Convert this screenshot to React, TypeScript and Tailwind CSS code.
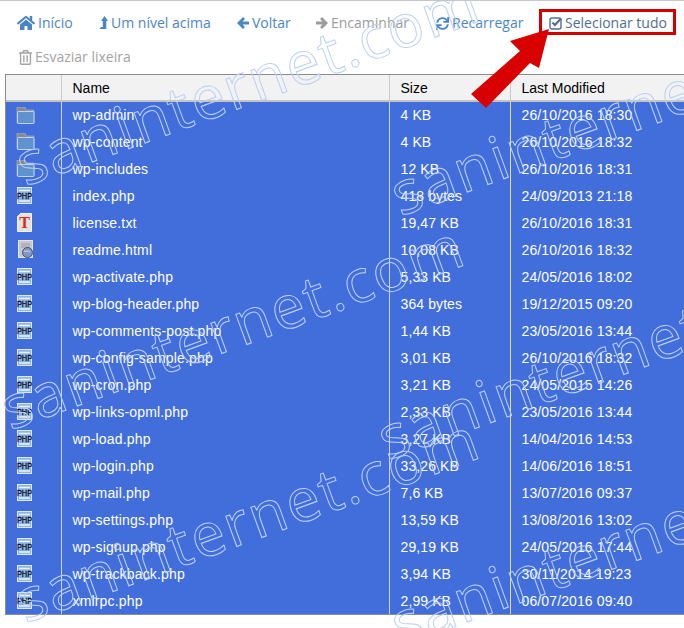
import { FaHome, FaSync, FaRegTrashAlt } from "react-icons/fa";

const files = [
  ["folder", "wp-admin", "4 KB", "26/10/2016 18:30"],
  ["folder", "wp-content", "4 KB", "26/10/2016 18:32"],
  ["folder", "wp-includes", "12 KB", "26/10/2016 18:31"],
  ["php", "index.php", "418 bytes", "24/09/2013 21:18"],
  ["txt", "license.txt", "19,47 KB", "26/10/2016 18:31"],
  ["html", "readme.html", "10,08 KB", "26/10/2016 18:32"],
  ["php", "wp-activate.php", "5,33 KB", "24/05/2016 18:02"],
  ["php", "wp-blog-header.php", "364 bytes", "19/12/2015 09:20"],
  ["php", "wp-comments-post.php", "1,44 KB", "23/05/2016 13:44"],
  ["php", "wp-config-sample.php", "3,01 KB", "26/10/2016 18:32"],
  ["php", "wp-cron.php", "3,21 KB", "24/05/2015 14:26"],
  ["php", "wp-links-opml.php", "2,33 KB", "23/05/2016 13:44"],
  ["php", "wp-load.php", "3,27 KB", "14/04/2016 14:53"],
  ["php", "wp-login.php", "33,26 KB", "14/06/2016 18:51"],
  ["php", "wp-mail.php", "7,6 KB", "13/07/2016 09:37"],
  ["php", "wp-settings.php", "13,59 KB", "13/08/2016 13:02"],
  ["php", "wp-signup.php", "29,19 KB", "24/05/2016 17:44"],
  ["php", "wp-trackback.php", "3,94 KB", "30/11/2014 19:23"],
  ["php", "xmlrpc.php", "2,99 KB", "06/07/2016 09:40"],
];

function FileIcon({ type }: { type: string }) {
  if (type === "folder") {
    return (
      <svg width="19" height="17" viewBox="0 0 19 17" className="block">
        <path d="M1 0h8l1 3h8v13H1z" fill="#868a90" stroke="#b9bdc4" strokeWidth="0.6" />
        <rect x="1.5" y="4.5" width="16.5" height="12" rx="1" fill="#5f93cf" stroke="#c5d3e6" />
      </svg>
    );
  }
  if (type === "txt") {
    return (
      <svg width="19" height="19" viewBox="0 0 19 19" className="block">
        <path d="M1.5 3.5l3-3h11v18h-14z" fill="#e6e1dc" stroke="#f4f2f0" />
        <text x="8.5" y="15" textAnchor="middle" fontSize="16" fontWeight="700" fontFamily="'Liberation Serif', serif" fill="#d42a2a">T</text>
      </svg>
    );
  }
  if (type === "html") {
    return (
      <svg width="19" height="19" viewBox="0 0 19 19" className="block">
        <rect x="2.5" y="0.5" width="14" height="17" fill="#c9c9c9" stroke="#e4e4e4" />
        <rect x="5" y="3" width="9" height="5" fill="#b4b4b4" />
        <circle cx="11.5" cy="12.5" r="5" fill="#7d97c9" stroke="#45536e" />
        <path d="M8 11c2 1 4-1 6 1" stroke="#d8e2f2" fill="none" />
      </svg>
    );
  }
  return (
    <svg width="18" height="18" viewBox="0 0 18 18" className="block">
      <rect x="1.5" y="0.5" width="14" height="16" fill="#8fb6e0" stroke="#dce8f5" />
      <path d="M3 3.5h11M3 14h11" stroke="#eaf2fb" strokeWidth="1.5" />
      <text x="8.5" y="12" textAnchor="middle" fontSize="9.5" fontWeight="400" textLength="15" lengthAdjust="spacingAndGlyphs" fontFamily="'Liberation Sans', sans-serif" fill="#04041e" stroke="#04041e" strokeWidth="0.3">PHP</text>
    </svg>
  );
}

function Watermark({ className }: { className: string }) {
  return (
    <div className={`absolute origin-bottom-left -rotate-20 whitespace-nowrap font-['Open_Sans',sans-serif] text-[60px] leading-none tracking-[2px] text-transparent [-webkit-text-stroke:1px_#bcd0f4] ${className}`}>
      saninternet.com
    </div>
  );
}

export default function App() {
  return (
    <div className="relative h-[628px] w-[684px] overflow-hidden border-t border-[#c3c7cb] bg-white font-['Open_Sans',sans-serif] text-sm">
      <div className="flex h-[43px] items-center pl-[17px] pt-[1px] text-[#4a86c5]">
        <span className="flex w-[82px] items-center gap-[3px]"><FaHome size={18} />Início</span>
        <span className="flex w-[138px] items-center gap-[3px]">
          <svg width="9" height="14" viewBox="0 0 9 14" fill="currentColor"><polygon points="5.5,0 9,5 7.3,5 7.3,13 0.5,13 2,11 3.8,11 3.8,5 2,5" /></svg>
          Um nível acima
        </span>
        <span className="flex w-[79px] items-center gap-[3px]">
          <svg width="12" height="14" viewBox="0 0 12 14" fill="currentColor"><polygon points="0,7 6,1 8,3 5.5,5.5 12,5.5 12,8.5 5.5,8.5 8,11 6,13" /></svg>
          Voltar
        </span>
        <span className="flex w-[120px] items-center gap-[3px] text-[#9b9b9b]">
          <svg width="12" height="14" viewBox="0 0 12 14" fill="currentColor"><polygon points="12,7 6,1 4,3 6.5,5.5 0,5.5 0,8.5 6.5,8.5 4,11 6,13" /></svg>
          Encaminhar
        </span>
        <span className="flex w-[113px] items-center gap-[3px]"><FaSync size={13} />Recarregar</span>
        <span className="flex items-center gap-[2px] text-[#4f6f8f]">
          <svg width="14" height="14" viewBox="0 0 14 14" fill="none" stroke="currentColor">
            <rect x="1" y="2" width="11" height="11" rx="2" strokeWidth="1.4" />
            <path d="M3.5 6.5l2.5 2.5 6-6.5" strokeWidth="2.2" />
          </svg>
          Selecionar tudo
        </span>
      </div>
      <div className="flex h-[30px] items-center gap-[2px] pb-[4px] pl-[18px] text-[#a3a3a3]">
        <FaRegTrashAlt size={15} />Esvaziar lixeira
      </div>
      <div className="ml-[5px] border-y border-l border-[#8c8c8c] font-['Liberation_Sans',sans-serif]">
        <table className="w-full table-fixed border-collapse">
          <colgroup>
            <col className="w-[55px]" />
            <col className="w-[328px]" />
            <col className="w-[121px]" />
            <col />
          </colgroup>
          <thead>
            <tr className="h-[26px] border-b-2 border-[#c4c4c4] bg-[#f2f2f2] text-left text-black">
              <th className="font-normal"></th>
              <th className="border-l border-[#c9c9c9] pl-[11px] pt-[1px] font-normal">Name</th>
              <th className="border-l border-[#c9c9c9] pl-[11px] pt-[1px] font-normal">Size</th>
              <th className="border-l border-[#c9c9c9] pl-[11px] pt-[1px] font-normal">Last Modified</th>
            </tr>
          </thead>
          <tbody className="bg-[#426edb] text-white">
            {files.map((f) => (
              <tr key={f[1]} className="h-[27px]">
                <td className="pl-[10px]"><FileIcon type={f[0]} /></td>
                <td className="border-l border-[#c9d6f2] pl-[11px] tracking-[0.17px]">{f[1]}</td>
                <td className="border-l border-[#c9d6f2] pl-[11px] tracking-[0.1px]">{f[2]}</td>
                <td className="border-l border-[#e6dcc0] pl-[11px] tracking-[0.12px]">{f[3]}</td>
              </tr>
            ))}
          </tbody>
        </table>
      </div>

      <Watermark className="left-[28px] top-[132px]" />
      <Watermark className="left-[13px] top-[376px]" />
      <Watermark className="left-[28px] top-[569px]" />
      <Watermark className="left-[403px] top-[162px]" />
      <Watermark className="left-[390px] top-[406px]" />
      <Watermark className="left-[403px] top-[592px]" />

      <div className="absolute left-[539px] top-[8px] h-[26px] w-[137px] border-[3px] border-[#d40000]"></div>
      <svg className="absolute left-0 top-0" width="684" height="628" viewBox="0 0 684 628">
        <polygon points="549,28 539,67 530,62 486,107 471,93 520,50 510,40" fill="#d80000" />
      </svg>
    </div>
  );
}
